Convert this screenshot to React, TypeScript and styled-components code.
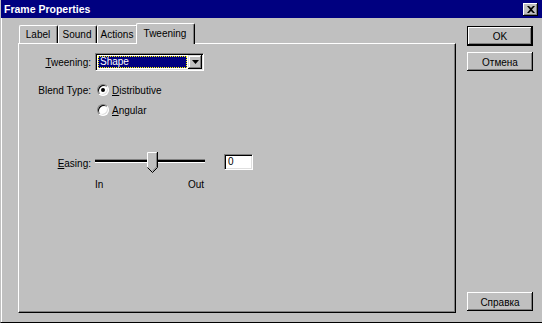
import styled, { createGlobalStyle } from 'styled-components';

const GlobalStyle = createGlobalStyle`
	html, body {
		margin: 0;
		padding: 0;
		background: #c0c0c0;
	}
	body {
		font-family: 'Liberation Sans', Arial, sans-serif;
		font-size: 10px;
		color: #000;
	}
`;

const Window = styled.div`
	width: 542px;
	height: 323px;
	box-sizing: border-box;
	background: #c0c0c0;
	display: flex;
	flex-direction: column;
	border-left: 1px solid #c0c0c0;
	border-bottom: 1px solid #000;
	box-shadow: inset 1px 0 #fff;
	overflow: hidden;
`;

const TitleBar = styled.div`
	height: 18px;
	flex: none;
	margin-left: -1px;
	background: #000080;
	color: #fff;
	display: flex;
	align-items: center;
	justify-content: space-between;
	padding: 0 4px 0 4px;
`;

const Title = styled.span`
	font-weight: bold;
	font-size: 10.5px;
`;

const CloseButton = styled.div`
	width: 15px;
	height: 13px;
	box-sizing: border-box;
	background: #c0c0c0;
	box-shadow: inset -1px -1px #000, inset 1px 1px #fff, inset -2px -2px #808080;
	display: flex;
	align-items: center;
	justify-content: center;
	margin-top: 1px;
`;

const Body = styled.div`
	flex: 1;
	display: flex;
	gap: 11px;
	padding: 5px 9px 9px 17px;
	min-height: 0;
`;

const TabArea = styled.div`
	width: 438px;
	display: flex;
	flex-direction: column;
`;

const TabRow = styled.div`
	height: 20px;
	display: flex;
	align-items: flex-end;
	padding-left: 1px;
	position: relative;
	z-index: 1;
`;

const Tab = styled.div<{ $active?: boolean; $w: number }>`
	width: ${p => p.$w}px;
	height: ${p => (p.$active ? 21 : 18)}px;
	margin: ${p => (p.$active ? '0 -2px -1px -2px' : '0')};
	box-sizing: border-box;
	background: #c0c0c0;
	border-top: 1px solid #fff;
	border-left: 1px solid #fff;
	border-right: 1px solid #000;
	border-radius: 2px 2px 0 0;
	box-shadow: inset -1px 0 #808080;
	display: flex;
	align-items: ${p => (p.$active ? 'flex-start' : 'center')};
	padding-top: ${p => (p.$active ? 4 : 0)}px;
	justify-content: center;
	padding-right: 1px;
`;

const Panel = styled.div`
	flex: 1;
	box-sizing: border-box;
	border-top: 1px solid #fff;
	border-left: 1px solid #fff;
	border-right: 1px solid #000;
	border-bottom: 1px solid #000;
	box-shadow: inset -1px -1px #808080;
	padding-top: 9px;
	display: flex;
	flex-direction: column;
`;

const Row = styled.div<{ $top?: number; $h: number }>`
	display: grid;
	grid-template-columns: 72px auto;
	column-gap: 4px;
	align-items: center;
	height: ${p => p.$h}px;
	margin-top: ${p => p.$top ?? 0}px;
`;

const Label = styled.span`
	text-align: right;
	white-space: nowrap;
`;

const Controls = styled.div<{ $gap?: number }>`
	display: flex;
	align-items: center;
	gap: ${p => p.$gap ?? 0}px;
`;

const Select = styled.div`
	width: 109px;
	height: 18px;
	box-sizing: border-box;
	background: #fff;
	border-top: 1px solid #808080;
	border-left: 1px solid #808080;
	border-right: 1px solid #fff;
	border-bottom: 1px solid #fff;
	box-shadow: inset 1px 1px #000, inset -1px -1px #dfdfdf;
	padding: 2px;
	display: flex;
	gap: 1px;
`;

const SelectValue = styled.div`
	flex: 1;
	background: #000080;
	color: #fff;
	outline: 1px dotted #ffff00;
	outline-offset: -1px;
	padding-left: 2px;
	line-height: 12px;
`;

const DropButton = styled.div`
	width: 14px;
	box-sizing: border-box;
	background: #c0c0c0;
	box-shadow: inset -1px -1px #000, inset 1px 1px #dfdfdf, inset -2px -2px #808080, inset 2px 2px #fff;
	display: flex;
	align-items: center;
	justify-content: center;
	margin: -1px -1px -1px 0;
`;

const RadioLine = styled.label`
	display: flex;
	align-items: center;
	gap: 3px;
	margin-left: 2px;
`;

const Radio = styled.span<{ $checked?: boolean }>`
	width: 12px;
	height: 12px;
	box-sizing: border-box;
	border-radius: 50%;
	background: #fff;
	border: 1px solid;
	border-color: #808080 #fff #fff #808080;
	box-shadow: inset 1px 1px #000, inset -1px -1px #dfdfdf;
	display: flex;
	align-items: center;
	justify-content: center;
	&::after {
		content: '';
		width: 4px;
		height: 4px;
		border-radius: 50%;
		background: ${p => (p.$checked ? '#000' : 'transparent')};
	}
`;

const Slider = styled.div`
	width: 110px;
	height: 22px;
	position: relative;
`;

const Track = styled.div`
	position: absolute;
	left: 0;
	right: 0;
	top: 8px;
	height: 2px;
	background: #000;
	border-bottom: 1px solid #fff;
	box-shadow: 0 -1px #808080;
`;

const Thumb = styled.svg`
	position: absolute;
	left: 52px;
	top: 0;
`;

const NumberBox = styled.div`
	width: 29px;
	height: 16px;
	box-sizing: border-box;
	background: #fff;
	border-top: 1px solid #808080;
	border-left: 1px solid #808080;
	border-right: 1px solid #fff;
	border-bottom: 1px solid #fff;
	box-shadow: inset 1px 1px #000, inset -1px -1px #dfdfdf;
	padding: 1px 0 0 3px;
	line-height: 12px;
	margin-top: -2px;
`;

const Scale = styled.div`
	width: 110px;
	display: flex;
	justify-content: space-between;
	padding-right: 1px;
	box-sizing: border-box;
`;

const ButtonColumn = styled.div`
	width: 66px;
	display: flex;
	flex-direction: column;
	padding-top: 3px;
	gap: 6px;
`;

const Button = styled.div<{ $default?: boolean }>`
	height: ${p => (p.$default ? 20 : 19)}px;
	box-sizing: border-box;
	background: #c0c0c0;
	border: ${p => (p.$default ? '1px solid #000' : 'none')};
	box-shadow: inset -1px -1px #000, inset 1px 1px #fff, inset -2px -2px #808080;
	display: flex;
	align-items: center;
	justify-content: center;
	padding-top: 1px;
`;

const BottomButton = styled(Button)`
	margin-top: auto;
	margin-bottom: 2px;
`;

function App() {
	return (
		<>
			<GlobalStyle />
			<Window>
				<TitleBar>
					<Title>Frame Properties</Title>
					<CloseButton>
						<svg width='8' height='7' viewBox='0 0 8 7'>
							<path d='M0 0h2l2 2 2-2h2L5 3.5 8 7H6L4 5 2 7H0l3-3.5z' fill='#000' />
						</svg>
					</CloseButton>
				</TitleBar>
				<Body>
					<TabArea>
						<TabRow>
							<Tab $w={39}>Label</Tab>
							<Tab $w={39}>Sound</Tab>
							<Tab $w={41}>Actions</Tab>
							<Tab $w={59} $active>
								Tweening
							</Tab>
						</TabRow>
						<Panel>
							<Row $h={18}>
								<Label>
									<u>T</u>weening:
								</Label>
								<Select>
									<SelectValue>Shape</SelectValue>
									<DropButton>
										<svg width='7' height='4' viewBox='0 0 7 4'>
											<path d='M0 0h7L3.5 4z' fill='#000' />
										</svg>
									</DropButton>
								</Select>
							</Row>
							<Row $top={12} $h={14}>
								<Label>Blend Type:</Label>
								<RadioLine>
									<Radio $checked />
									<span>
										<u>D</u>istributive
									</span>
								</RadioLine>
							</Row>
							<Row $top={6} $h={14}>
								<span />
								<RadioLine>
									<Radio />
									<span>
										<u>A</u>ngular
									</span>
								</RadioLine>
							</Row>
							<Row $top={35} $h={22}>
								<Label>
									<u>E</u>asing:
								</Label>
								<Controls $gap={19}>
									<Slider>
										<Track />
										<Thumb width='11' height='21' viewBox='0 0 11 21'>
											<path d='M0.5 0.5h10v15l-5 5l-5-5z' fill='#c0c0c0' />
											<path d='M0.5 15.5v-15h9' stroke='#fff' fill='none' />
											<path d='M10.5 0v15.5l-5 5l-5-5' stroke='#000' fill='none' />
											<path d='M9.5 1v14l-4 4' stroke='#808080' fill='none' />
										</Thumb>
									</Slider>
									<NumberBox>0</NumberBox>
								</Controls>
							</Row>
							<Row $top={3} $h={14}>
								<span />
								<Scale>
									<span>In</span>
									<span>Out</span>
								</Scale>
							</Row>
						</Panel>
					</TabArea>
					<ButtonColumn>
						<Button $default>OK</Button>
						<Button>Отмена</Button>
						<BottomButton>Справка</BottomButton>
					</ButtonColumn>
				</Body>
			</Window>
		</>
	);
}

export default App;
